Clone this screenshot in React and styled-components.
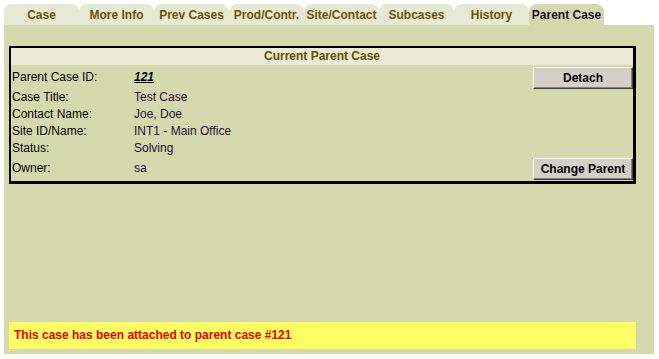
import styled, { createGlobalStyle } from "styled-components";

const Global = createGlobalStyle`
  body {
    margin: 0;
    background: #ffffff;
    font-family: Arial, "Liberation Sans", sans-serif;
    font-size: 12px;
  }
`;

const Page = styled.div`
  padding: 4px 5px 5px 4px;
  width: 650px;
`;

const TabBar = styled.div`
  display: flex;
  height: 21px;
`;

const Tab = styled.div`
  width: 75px;
  height: 21px;
  display: flex;
  align-items: center;
  justify-content: center;
  border-radius: 8px 8px 0 0;
  background: ${(p) => (p.active ? "#d5daae" : "#e6e9d3")};
  color: ${(p) => (p.active ? "#1c0f2e" : "#6f5204")};
  font-weight: bold;
  font-size: 12px;
  padding-top: 1px;
  box-sizing: border-box;
`;

const Panel = styled.div`
  background: #d5daae;
  height: 329px;
  padding: 21px 18px 5px 5px;
  box-sizing: border-box;
  display: flex;
  flex-direction: column;
  justify-content: space-between;
`;

const Box = styled.div`
  border: 2px solid #000;
  border-right-width: 3px;
  border-bottom-width: 3px;
`;

const BoxHeader = styled.div`
  background: #e8ead6;
  color: #6b4e00;
  text-align: center;
  font-weight: bold;
  height: 17px;
  line-height: 17px;
`;

const Grid = styled.div`
  display: grid;
  grid-template-columns: 122px 1fr 100px;
  grid-template-rows: 23px 17px 17px 17px 17px 23px;
  align-items: center;
  padding: 1px 0 1px 1px;
`;

const Label = styled.div`
  color: #000;
  height: ${(p) => (p.tall ? "23px" : "17px")};
  line-height: ${(p) => (p.tall ? "23px" : "17px")};
`;

const Value = styled.div`
  color: ${(p) => (p.link ? "#000" : "#2c0a3a")};
  height: ${(p) => (p.tall ? "23px" : "17px")};
  line-height: ${(p) => (p.tall ? "23px" : "17px")};
  font-weight: ${(p) => (p.link ? "bold" : "normal")};
  font-style: ${(p) => (p.link ? "italic" : "normal")};
  text-decoration: ${(p) => (p.link ? "underline" : "none")};
`;

const Button = styled.button`
  width: 100px;
  height: 22px;
  justify-self: end;
  background: #d4d0c8;
  border: 1px solid;
  border-color: #ffffff #404040 #404040 #ffffff;
  box-shadow: inset -1px -1px #808080;
  font-family: Arial, "Liberation Sans", sans-serif;
  font-size: 12px;
  font-weight: bold;
  color: #000;
  padding: 0;
`;

const Message = styled.div`
  background: #ffff66;
  color: #ee0000;
  font-weight: bold;
  font-size: 12px;
  height: 27px;
  line-height: 27px;
  padding-left: 5px;
`;

const tabs = [
  "Case",
  "More Info",
  "Prev Cases",
  "Prod/Contr.",
  "Site/Contact",
  "Subcases",
  "History",
  "Parent Case",
];

const Row = ({ label, value, tall, link, button }) => (
  <>
    <Label tall={tall}>{label}</Label>
    <Value tall={tall} link={link}>
      {value}
    </Value>
    {button ? <Button>{button}</Button> : <span />}
  </>
);

export default function App() {
  return (
    <Page>
      <Global />
      <TabBar>
        {tabs.map((t) => (
          <Tab key={t} active={t === "Parent Case"}>
            {t}
          </Tab>
        ))}
      </TabBar>
      <Panel>
        <Box>
          <BoxHeader>Current Parent Case</BoxHeader>
          <Grid>
            <Row label="Parent Case ID:" value="121" link tall button="Detach" />
            <Row label="Case Title:" value="Test Case" />
            <Row label="Contact Name:" value="Joe, Doe" />
            <Row label="Site ID/Name:" value="INT1 - Main Office" />
            <Row label="Status:" value="Solving" />
            <Row label="Owner:" value="sa" tall button="Change Parent" />
          </Grid>
        </Box>
        <Message>This case has been attached to parent case #121</Message>
      </Panel>
    </Page>
  );
}
